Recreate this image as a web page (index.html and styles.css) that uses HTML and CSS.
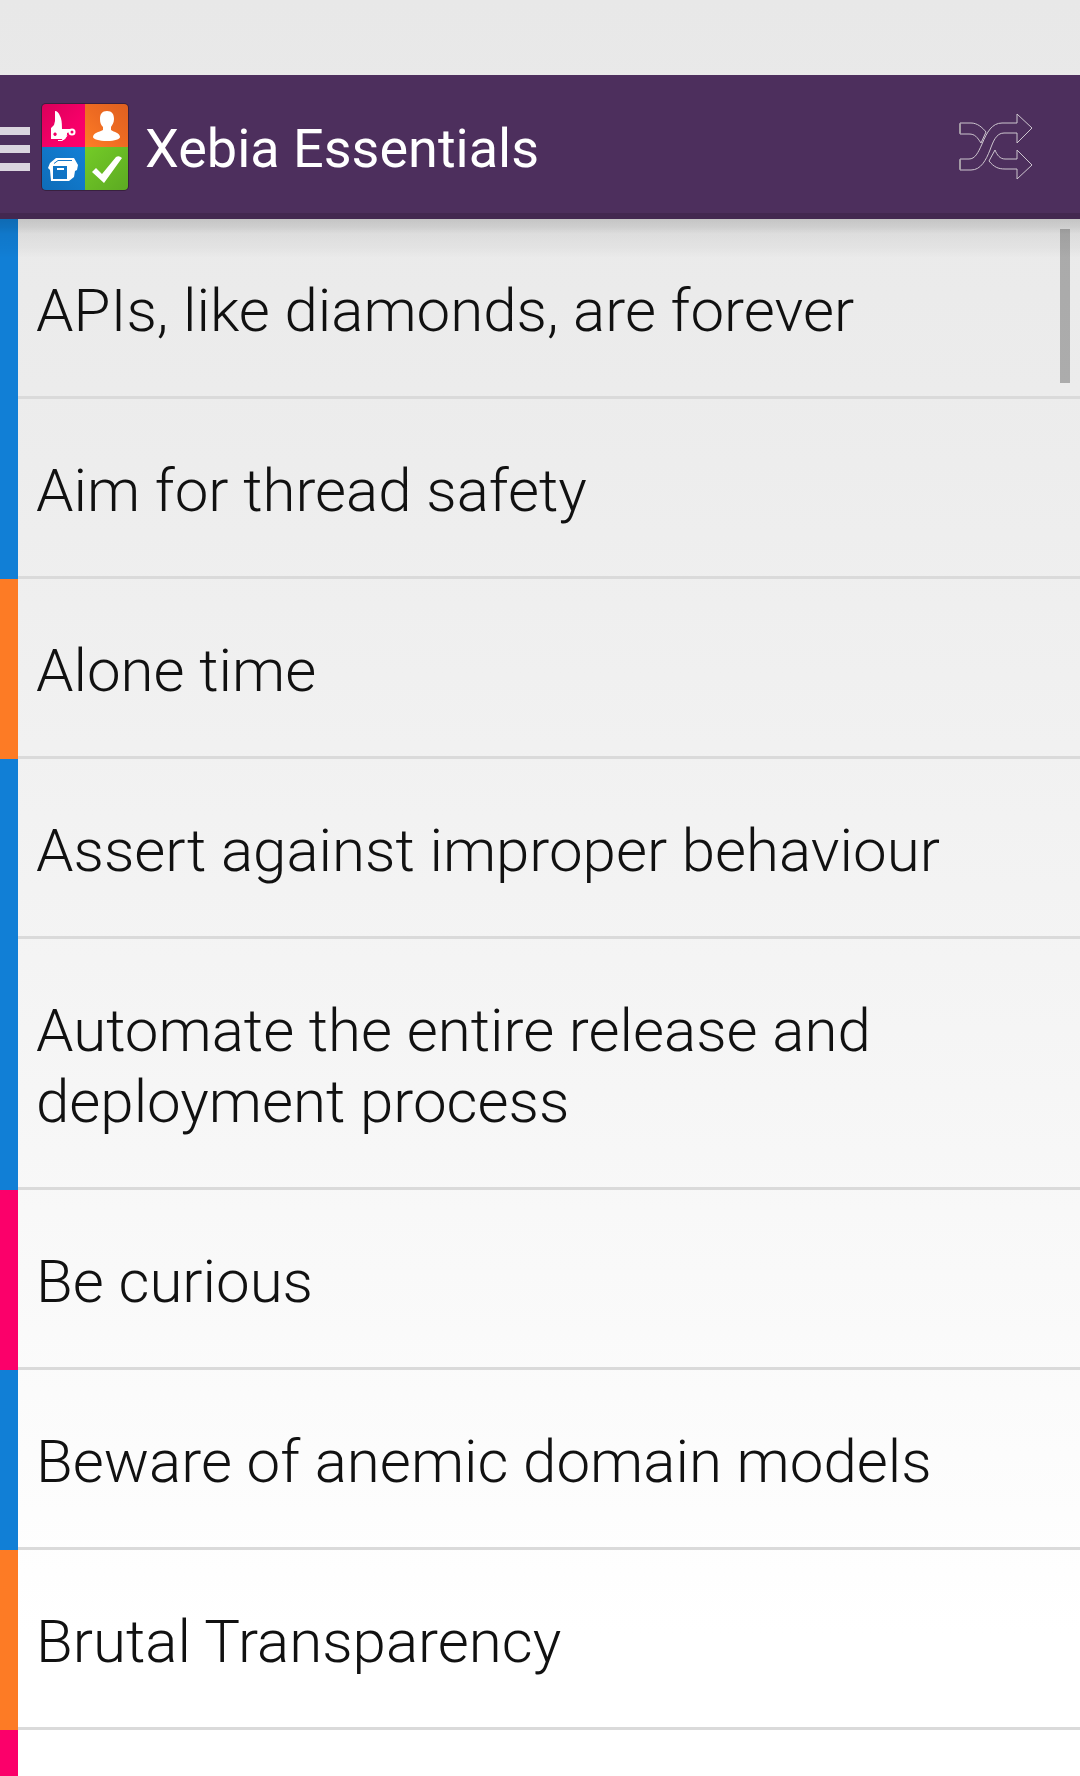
FILE: index.html
```html
<!DOCTYPE html>
<html lang="en">
<head>
<meta charset="utf-8">
<meta name="viewport" content="width=device-width, initial-scale=1">
<title>Xebia Essentials</title>
<link rel="stylesheet" href="styles.css">
</head>
<body>
<header class="bar">
  <button class="menu" type="button" aria-label="Open menu">
    <span class="menu-line"></span>
    <span class="menu-line"></span>
    <span class="menu-line"></span>
  </button>
  <svg class="logo" viewBox="0 0 88 88" aria-hidden="true">
    <defs>
      <linearGradient id="pink" x1="0" y1="0" x2="1" y2="1"><stop offset="0" stop-color="#d9005a"/><stop offset="0.6" stop-color="#f60068"/><stop offset="1" stop-color="#ff006c"/></linearGradient>
      <linearGradient id="orange" x1="1" y1="0" x2="0" y2="1"><stop offset="0" stop-color="#df6020"/><stop offset="0.5" stop-color="#ee6b22"/><stop offset="1" stop-color="#ff7e26"/></linearGradient>
      <linearGradient id="blue" x1="0" y1="1" x2="1" y2="0"><stop offset="0" stop-color="#0f6cb8"/><stop offset="1" stop-color="#1280d6"/></linearGradient>
      <linearGradient id="green" x1="1" y1="1" x2="0" y2="0"><stop offset="0" stop-color="#5caa22"/><stop offset="1" stop-color="#74cb27"/></linearGradient>
      <clipPath id="tile"><rect x="1" y="1" width="86" height="86" rx="4"/></clipPath>
    </defs>
    <rect width="88" height="88" rx="5" fill="#38203f"/>
    <g clip-path="url(#tile)">
      <path fill="url(#pink)" d="M1 1h43v43H1z"/>
      <path fill="url(#orange)" d="M44 1h43v43H44z"/>
      <path fill="url(#blue)" d="M1 44h43v43H1z"/>
      <path fill="url(#green)" d="M44 44h43v43H44z"/>
    </g>
    <path fill="#fff" fill-rule="evenodd" d="M14 8q3 0 5 5 2 3 2 13v10H10V25l3-3 1-4zM14 29.500a1.700 1.700 0 1 0 .1 0z"/>
    <path fill="#fff" d="M20 26h9v3l-3 1v2l3 1-3-1-2 4-3 1z"/>
    <path fill="none" stroke="#fff" d="M17 37.500h4q3-1 5-5"/>
    <circle cx="31" cy="29" r="2.500" fill="none" stroke="#fff" stroke-width="2"/>
    <path fill="#fff" d="M66 8c5 0 7 3 7 8 0 4-2 6-3 8v3c3 2 9 3 9 7 0 2-5 4-13 4s-14-2-14-4c0-4 6-5 10-7v-3c-2-2-3-4-3-8 0-5 2-8 7-8z"/>
    <path fill="#fff" fill-rule="evenodd" d="M15 55h18l4 7-1 5-2 1-1 6-5 4H10L9 67l-2-2 2-5zM12 63v13h14V63z"/>
    <path fill="none" stroke="#1276c8" d="M13 60.500 17 57.500h14"/>
    <path fill="#fff" d="M16 65h7v2h-7z"/>
    <path fill="#fff" d="m51 69 4-4 6 6 14-17q3-2 6 1L63 80z"/>
  </svg>
  <h1 class="title">Xebia Essentials</h1>
  <button class="shuffle" type="button" aria-label="Shuffle">
    <svg viewBox="0 0 76 68" width="76" height="68" fill="none" stroke="#cdc6cf" stroke-width="1" aria-hidden="true">
      <path d="M2 10h11c6 0 11 4 15 9l-5 11c-4-6-6-9-12-9H2q-1-5 0-11z"/>
      <path d="M2 46h9c6 0 9-6 13-15 5-12 10-21 20-21h15V1l15 14-15 15V20H46c-8 0-11 9-14 17-4 10-9 20-19 20H2q-1-6 0-11z"/>
      <path d="m37 37-6 11c5 6 9 8 16 8h12v10l15-14-15-15v9H47c-5 0-8-4-10-9z"/>
      <path stroke="#a39aa4" stroke-width="2" d="M2 11v9M2 47v9"/>
    </svg>
  </button>
</header>
<main class="content">
  <ul class="list">
    <li class="row blue"><a class="link" href="#apis">APIs, like diamonds, are forever</a></li>
    <li class="row blue"><a class="link" href="#thread-safety">Aim for thread safety</a></li>
    <li class="row orange"><a class="link" href="#alone-time">Alone time</a></li>
    <li class="row blue"><a class="link" href="#assert">Assert against improper behaviour</a></li>
    <li class="row blue"><a class="link" href="#automate">Automate the entire release and deployment process</a></li>
    <li class="row pink"><a class="link" href="#curious">Be curious</a></li>
    <li class="row blue"><a class="link" href="#anemic">Beware of anemic domain models</a></li>
    <li class="row orange"><a class="link" href="#transparency">Brutal Transparency</a></li>
    <li class="row pink rest"></li>
  </ul>
  <div class="scrollbar"></div>
</main>
</body>
</html>
```
FILE: styles.css
```css
* {
  box-sizing: border-box;
}

body {
  display: flex;
  flex-direction: column;
  height: 100vh;
  margin: 0;
  padding-top: 75px;
  overflow: hidden;
  background: linear-gradient(#e8e8e8, #ececec 22%, #f5f5f5 58%, #fff 92%);
  font-family: Roboto, "Liberation Sans", sans-serif;
}

.bar {
  display: flex;
  flex: none;
  align-items: center;
  height: 144px;
  padding-right: 46px;
  border-bottom: 6px solid #432850;
  background: #4d2f5d;
}

.menu,
.shuffle {
  padding: 0;
  border: 0;
  background: none;
}

.menu {
  display: flex;
  flex-direction: column;
  gap: 10px;
  width: 30px;
  margin-top: 10px;
}

.menu-line {
  height: 8px;
  background: #dbd5df;
}

.logo {
  width: 88px;
  height: 88px;
  margin: 6px 16px 0 11px;
}

.title {
  flex: 1;
  margin: 10px 0 0;
  color: #fff;
  font-size: 54px;
  font-weight: 400;
  line-height: 64px;
}

.shuffle {
  display: flex;
  margin-top: 6px;
}

.content {
  position: relative;
  display: flex;
  flex: 1;
  min-height: 0;
}

.content::before {
  content: "";
  position: absolute;
  inset: 0 0 auto;
  height: 39px;
  background: linear-gradient(rgba(0, 0, 0, 0.16), rgba(0, 0, 0, 0.12) 20%, rgba(0, 0, 0, 0.06) 38%, rgba(0, 0, 0, 0.03) 75%, transparent);
  pointer-events: none;
}

.list {
  display: flex;
  flex: 1;
  flex-direction: column;
  margin: 0;
  padding: 0;
  list-style: none;
}

.row {
  flex: none;
  border-left: 18px solid;
}

.blue {
  border-color: #117fd6;
}

.orange {
  border-color: #fd7b25;
}

.pink {
  border-color: #fb006a;
}

.rest {
  flex: 1;
}

.link {
  display: block;
  padding: 56px 100px 50px 18px;
  border-bottom: 3px solid #dadada;
  color: #111;
  font-size: 60px;
  font-weight: 300;
  line-height: 71px;
  text-decoration: none;
}

.scrollbar {
  position: absolute;
  top: 10px;
  right: 10px;
  width: 10px;
  height: 154px;
  background: rgba(0, 0, 0, 0.27);
}
```
